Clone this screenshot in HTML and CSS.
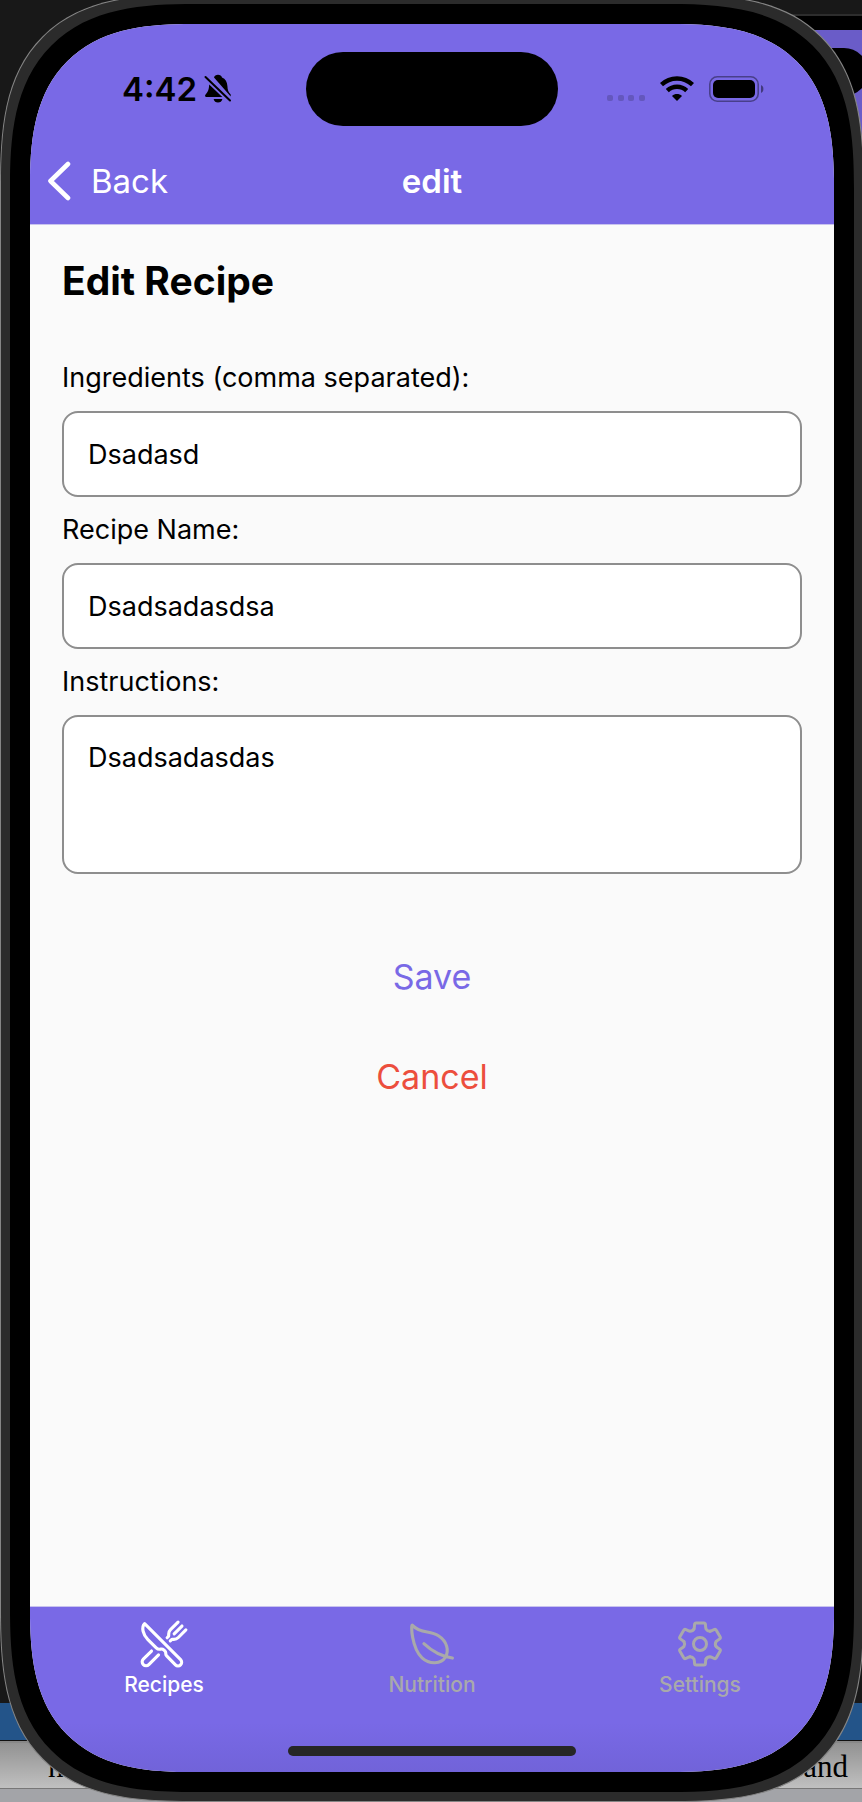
FILE: index.html
```html
<!DOCTYPE html>
<html lang="en">
<head>
<meta charset="utf-8">
<meta name="viewport" content="width=device-width, initial-scale=1">
<title>Edit Recipe</title>
<link rel="stylesheet" href="styles.css">
</head>
<body>
<div class="desktop">
  <div class="backdrop" aria-hidden="true">
    <div class="other-phone"><div class="other-island"></div></div>
    <div class="doc-bar"></div>
    <div class="doc-line"><span>n</span><span>and</span></div>
    <div class="doc-foot"></div>
  </div>
  <div class="phone">
    <div class="screen">
      <header class="header">
        <div class="status">
          <div class="status-left">
            <span class="time">4:42</span>
            <svg class="bell" viewBox="0 0 28 30" aria-hidden="true">
              <path d="M10 3.6C10.500 1.800 12 .8 14 .8s3.500 1 4 2.800c3.500 1.400 5.200 4.500 5.400 8.400.2 4 1 6.300 3.300 8.600v2z"/>
              <path d="M5.200 10.500L18.300 23H2.500C1 23 .6 21.400 1.600 20.400c2.400-2.500 3.300-4.700 3.600-9.900zM9.600 25h8.800c-.5 2.300-2.200 3.600-4.400 3.600s-3.900-1.300-4.400-3.600z"/>
              <path d="M1.500 3L26 26.500" fill="none" stroke="#000" stroke-width="2" stroke-linecap="round"/>
            </svg>
          </div>
          <div class="island"></div>
          <div class="status-right">
            <svg class="signal" viewBox="0 0 39 26" aria-hidden="true">
              <rect x="0" y="19" width="6" height="6" rx="2"/><rect x="11" y="19" width="6" height="6" rx="2"/><rect x="21" y="19" width="6" height="6" rx="2"/><rect x="32" y="19" width="6" height="6" rx="2"/>
            </svg>
            <svg class="wifi" viewBox="0 0 34 26" aria-hidden="true">
              <path d="M1.500 8.700a22.500 22.500 0 0 1 31 0M7.300 14.700a14 14 0 0 1 19.400 0" fill="none" stroke="#000" stroke-width="4.400"/>
              <path d="M17 25l-5-5c2.800-2.600 7.200-2.600 10 0z"/>
            </svg>
            <svg class="battery" viewBox="0 0 56 26" aria-hidden="true">
              <rect x=".8" y=".8" width="48.400" height="24.400" rx="7.500" fill="none" stroke="#000" stroke-opacity=".4" stroke-width="1.600"/>
              <rect x="4" y="4" width="42" height="18" rx="5"/>
              <path d="M52 9c3.200 1.200 3.200 6.800 0 8z" opacity=".45"/>
            </svg>
          </div>
        </div>
        <nav class="nav">
          <button class="back" type="button">
            <svg viewBox="0 0 24 40" aria-hidden="true"><path d="M21 3L3.500 20 21 37" fill="none" stroke="#fff" stroke-width="4.600" stroke-linecap="round" stroke-linejoin="round"/></svg>
            Back
          </button>
          <div class="nav-title">edit</div>
        </nav>
      </header>
      <main class="content">
        <h1>Edit Recipe</h1>
        <form class="form">
          <label for="ingredients">Ingredients (comma separated):</label>
          <input id="ingredients" type="text" value="Dsadasd">
          <label for="name">Recipe Name:</label>
          <input id="name" type="text" value="Dsadsadasdsa">
          <label for="instructions">Instructions:</label>
          <textarea id="instructions">Dsadsadasdas</textarea>
          <div class="actions">
            <button class="save" type="button">Save</button>
            <button class="cancel" type="button">Cancel</button>
          </div>
        </form>
      </main>
      <footer class="footer">
        <nav class="tabs">
          <a class="tab active" href="#recipes">
            <svg viewBox="0 0 512 512" aria-hidden="true"><path d="M57.490 47.740l368.430 368.430a37.280 37.280 0 0 1 0 52.720a37.290 37.290 0 0 1-52.720 0l-90-91.550a32 32 0 0 1-9.200-22.430v-5.530a32 32 0 0 0-9.520-22.780l-11.620-10.730a32 32 0 0 0-29.800-7.440a48.530 48.530 0 0 1-46.560-12.630l-85.430-85.440C40.390 159.680 21.740 83.150 57.490 47.740z"/><path d="M400 32l-77.250 77.250A64 64 0 0 0 304 154.510v14.860a16 16 0 0 1-4.680 11.320L288 192M320 224l11.310-11.310a16 16 0 0 1 11.320-4.690h14.860a64 64 0 0 0 45.260-18.750L480 112M440 72l-80 80M200 368l-99.280 99.280a40 40 0 0 1-56.570 0a40 40 0 0 1 0-56.570L128 328"/></svg>
            Recipes
          </a>
          <a class="tab" href="#nutrition">
            <svg viewBox="0 0 512 512" aria-hidden="true"><path d="M321.890 171.420C233 114 141 155.220 56 65.220c-19.800-21-8.300 235.500 98.100 332.700 77.790 71 197.900 63.080 238.400-5.920s18.280-163.170-70.610-220.580zM173 253c86 81 175 129 292 147"/></svg>
            Nutrition
          </a>
          <a class="tab" href="#settings">
            <svg class="gear" viewBox="-25 -25 50 50" aria-hidden="true">
              <defs><path id="tooth" d="M-6-15Q-5.500-17-5.500-19Q-5.500-21-3.800-21H3.800Q5.500-21 5.500-19Q5.500-17 6-15Q7.500-12.600 10-12.700"/></defs>
              <use href="#tooth"/><use href="#tooth" transform="rotate(60)"/><use href="#tooth" transform="rotate(120)"/><use href="#tooth" transform="rotate(180)"/><use href="#tooth" transform="rotate(240)"/><use href="#tooth" transform="rotate(300)"/>
              <circle r="6.500"/>
            </svg>
            Settings
          </a>
        </nav>
        <div class="home-bar"></div>
      </footer>
    </div>
  </div>
</div>
</body>
</html>
```
FILE: styles.css
```css
* { box-sizing: border-box; }
body {
  margin: 0;
  font-family: Inter, "Liberation Sans", sans-serif;
  color: #000;
}
button {
  border: 0;
  background: none;
  font: inherit;
  cursor: pointer;
}
.desktop {
  position: relative;
  display: flex;
  min-height: 100vh;
  overflow: hidden;
  background: #181818;
}

/* Windows lying behind the phone */
.backdrop {
  position: absolute;
  inset: 0;
  display: flex;
  flex-direction: column;
  justify-content: flex-end;
  overflow: hidden;
}
.other-phone {
  position: absolute;
  top: 14px;
  right: 0;
  width: 90px;
  height: 160px;
  border-top: 2px solid #2d2d2d;
  background: linear-gradient(#000 14px, #6a5cc8 14px);
}
.other-island {
  width: 84px;
  height: 48px;
  margin: 32px 0 0 12px;
  border-radius: 24px;
  background: #000;
}
.doc-bar {
  height: 38px;
  border-bottom: 1px solid #111;
  background: #235489;
}
.doc-line {
  display: flex;
  justify-content: space-between;
  height: 47px;
  padding: 6px 14px 0 48px;
  border-top: 2px solid #888;
  background: linear-gradient(#929292, #c0c0c0);
  font: 31px/36px "Liberation Serif", serif;
}
.doc-foot {
  height: 14px;
  border-top: 1px solid #777;
  background: #a3a4a8;
}

/* Phone body */
.phone {
  position: relative;
  display: flex;
  flex: 1;
  margin: -6px -2px 0 0;
  padding: 9px;
  border: 1px solid #858585;
  border-radius: 152px;
  background: #2b2b2b;
}
.screen {
  display: flex;
  flex: 1;
  flex-direction: column;
  border: 20px solid #000;
  border-radius: 146px;
  background: #fafafa;
  overflow: hidden;
}
@supports (corner-shape: superellipse(1.5)) {
  .phone {
    border-radius: 195px;
    corner-shape: superellipse(1.5);
  }
  .screen {
    border-radius: 185px;
    corner-shape: superellipse(1.45);
  }
}

/* Header */
.header {
  border-bottom: 1px solid #c8c3ee;
  background: #7969e6;
}
.status {
  display: grid;
  grid-template-columns: 1fr 252px 1fr;
  align-items: center;
  padding: 28px 0 12px;
}
.status-left, .status-right {
  display: flex;
  align-items: center;
}
.status-left {
  justify-content: flex-end;
  gap: 7px;
  padding-right: 74px;
}
.status-right { padding-left: 49px; }
.time {
  font-size: 33px;
  font-weight: 600;
  line-height: 40px;
}
.bell { width: 28px; height: 30px; }
.island {
  height: 74px;
  border-radius: 37px;
  background: #000;
}
.signal {
  width: 39px;
  height: 26px;
  margin-right: 14px;
  fill: #6457bd;
}
.wifi {
  width: 34px;
  height: 26px;
  margin-right: 15px;
}
.battery { width: 56px; height: 26px; }
.nav {
  display: grid;
  grid-template-columns: 1fr auto 1fr;
  align-items: center;
  height: 86px;
  padding: 0 17px;
  color: #fff;
  font-size: 33px;
  line-height: 44px;
}
.back {
  display: flex;
  align-items: center;
  justify-self: start;
  gap: 20px;
  padding: 0;
  color: #fff;
}
.back svg { width: 24px; height: 40px; }
.nav-title { font-weight: 600; }

/* Form */
.content {
  flex: 1;
  padding: 32px;
}
h1 {
  margin: 0 0 56px;
  font-size: 39px;
  line-height: 48px;
}
.form {
  display: flex;
  flex-direction: column;
  gap: 16px;
  font-size: 27px;
  line-height: 34px;
}
input, textarea {
  display: block;
  width: 100%;
  height: 86px;
  padding: 24px;
  border: 2px solid #8e8e8e;
  border-radius: 16px;
  background: #fff;
  color: #000;
  font: inherit;
}
textarea {
  height: 159px;
  resize: none;
}
.actions {
  display: flex;
  flex-direction: column;
  align-items: center;
  margin-top: 37px;
  font-size: 34px;
  line-height: 44px;
}
.actions button { padding: 28px; }
.save { color: #7969e6; }
.cancel { color: #ec4e3d; }

/* Tab bar */
.footer {
  border-top: 1px solid #c8c3ee;
  background: linear-gradient(#7969e6 70%, #7163d9);
}
.tabs {
  display: grid;
  grid-template-columns: repeat(3, 1fr);
  padding: 12px 0 49px;
}
.tab {
  display: flex;
  flex-direction: column;
  align-items: center;
  gap: 4px;
  color: #a9a9ab;
  font-size: 21px;
  font-weight: 500;
  line-height: 24px;
  text-decoration: none;
}
.tab.active { color: #fff; }
.tab svg {
  width: 50px;
  height: 50px;
  fill: none;
  stroke: currentColor;
  stroke-width: 32;
  stroke-linecap: round;
  stroke-linejoin: round;
}
.tab .gear { stroke-width: 3; }
.home-bar {
  width: 288px;
  height: 10px;
  margin: 0 auto 16px;
  border-radius: 5px;
  background: #262626;
}
```
